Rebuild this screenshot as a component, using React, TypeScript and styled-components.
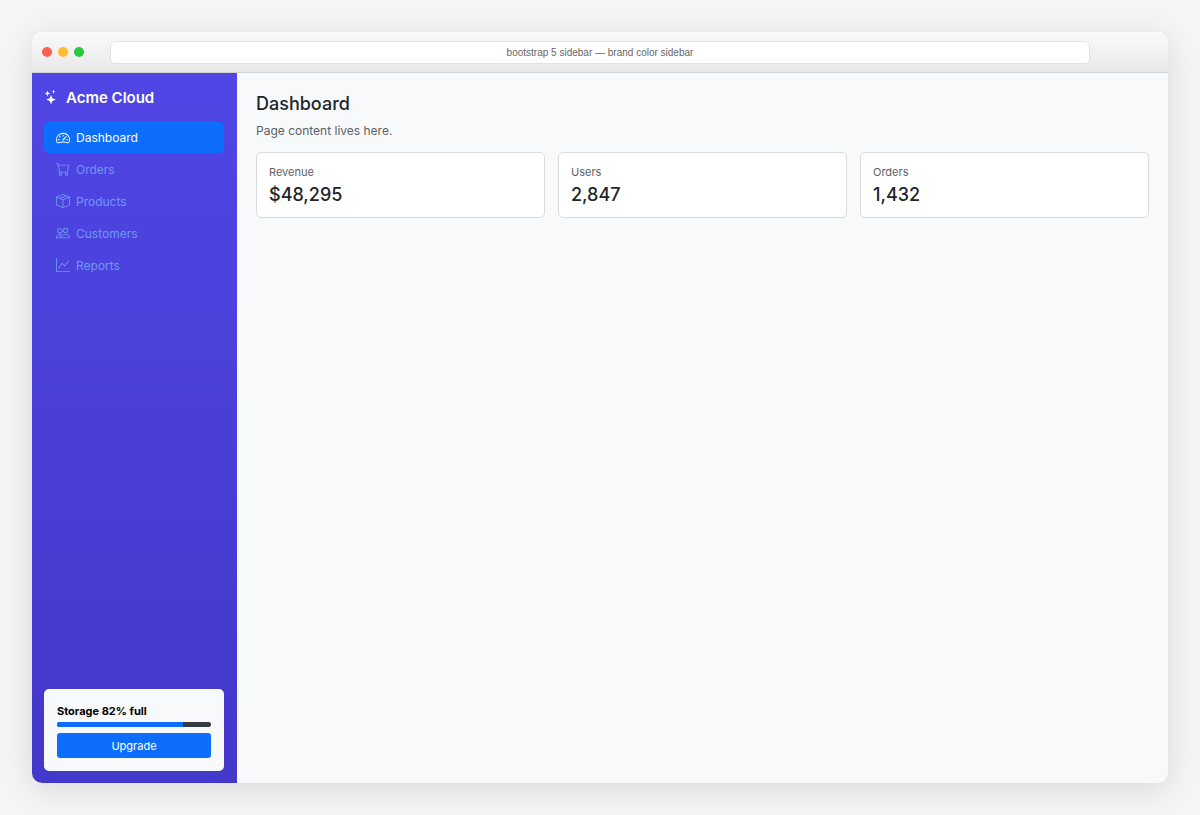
import React from 'react';
import styled, { createGlobalStyle } from 'styled-components';
import type { IconType } from 'react-icons';
import { BsBoxSeam, BsCart, BsGraphUp, BsPeople, BsSpeedometer2, BsStars } from 'react-icons/bs';

const GlobalStyle = createGlobalStyle`
  *, *::before, *::after { box-sizing: border-box; }
  body {
    margin: 0;
    background: #f5f5f7;
    color: #212529;
    font-family: Inter, "Liberation Sans", sans-serif;
    font-size: 12px;
  }
`;

const Page = styled.div`
  display: flex;
  min-height: 100vh;
  padding: 32px;
`;

const Window = styled.div`
  display: flex;
  flex: 1;
  flex-direction: column;
  min-width: 0;
  overflow: hidden;
  border-radius: 10px;
  background: #f8f9fb;
  box-shadow: 0 6px 32px rgba(0, 0, 0, 0.12);
`;

const TitleBar = styled.header`
  display: grid;
  grid-template-columns: 68px 1fr 68px;
  align-items: center;
  height: 41px;
  padding: 0 10px;
  border-bottom: 1px solid #d4d4d4;
  background: linear-gradient(#fafafa, #e8e8e8);
`;

const Lights = styled.div`
  display: flex;
  gap: 6px;
`;

const Light = styled.span<{ $color: string }>`
  width: 10px;
  height: 10px;
  border-radius: 50%;
  background: ${(p) => p.$color};
`;

const Address = styled.div`
  height: 23px;
  border: 1px solid #e2e2e2;
  border-radius: 5px;
  background: #fff;
  color: #666;
  font-family: "Liberation Sans", Arial, sans-serif;
  font-size: 10px;
  line-height: 21px;
  text-align: center;
`;

const Layout = styled.div`
  display: flex;
  flex: 1;
`;

const Sidebar = styled.aside`
  display: flex;
  flex-direction: column;
  flex: 0 0 205px;
  padding: 12px 13px 12px 12px;
  background: linear-gradient(#4f46e5, #4338ca);
`;

const Brand = styled.a`
  display: flex;
  align-items: center;
  gap: 8px;
  height: 24px;
  margin-bottom: 13px;
  color: #fff;
  font-size: 15px;
  font-weight: 600;
  text-decoration: none;
`;

const Nav = styled.nav`
  display: flex;
  flex-direction: column;
`;

const NavLink = styled.a<{ $active?: boolean }>`
  display: flex;
  align-items: center;
  gap: 6px;
  height: 31px;
  padding: 0 12px;
  border-radius: 5px;
  background: ${(p) => (p.$active ? '#0d6efd' : 'transparent')};
  color: ${(p) => (p.$active ? '#fff' : '#6f98f6')};
  font-size: 12px;
  text-decoration: none;

  & + & {
    height: 32px;
  }
`;

const StorageCard = styled.section`
  margin-top: auto;
  padding: 13px;
  border-radius: 5px;
  background: #f8f9fb;
`;

const StorageLabel = styled.label`
  display: block;
  margin-bottom: 2px;
  color: #000;
  font-size: 11px;
  font-weight: 700;
  line-height: 18px;
`;

const Meter = styled.progress`
  display: block;
  appearance: none;
  width: 100%;
  height: 5px;
  margin-bottom: 6px;
  overflow: hidden;
  border: 0;
  border-radius: 3px;
  &::-webkit-progress-bar { background: #343a40; }
  &::-webkit-progress-value { background: #0d6efd; }
  &::-moz-progress-bar { background: #0d6efd; }
`;

const UpgradeButton = styled.button`
  display: block;
  width: 100%;
  height: 25px;
  padding: 0;
  border: 0;
  border-radius: 3px;
  background: #0d6efd;
  color: #fff;
  font: inherit;
  font-size: 11px;
`;

const Content = styled.main`
  flex: 1;
  min-width: 0;
  padding: 19px;
`;

const Heading = styled.h1`
  margin: 0 0 6px;
  font-size: 18px;
  font-weight: 500;
  line-height: 23px;
`;

const Lead = styled.p`
  margin: 0 0 12px;
  color: #5c6166;
  font-size: 12px;
  line-height: 19px;
`;

const Cards = styled.div`
  display: grid;
  grid-template-columns: repeat(3, 1fr);
  gap: 13px;
`;

const Card = styled.section`
  padding: 11px 12px;
  border: 1px solid #d9dbde;
  border-radius: 5px;
  background: #fff;
`;

const CardLabel = styled.div`
  margin-bottom: 4px;
  color: #5c6166;
  font-size: 11px;
  line-height: 16px;
`;

const CardValue = styled.div`
  font-size: 18px;
  font-weight: 500;
  line-height: 22px;
`;

const links: { label: string; icon: IconType }[] = [
  { label: 'Dashboard', icon: BsSpeedometer2 },
  { label: 'Orders', icon: BsCart },
  { label: 'Products', icon: BsBoxSeam },
  { label: 'Customers', icon: BsPeople },
  { label: 'Reports', icon: BsGraphUp },
];

const stats = [
  { label: 'Revenue', value: '$48,295' },
  { label: 'Users', value: '2,847' },
  { label: 'Orders', value: '1,432' },
];

export default function App() {
  return (
    <>
      <GlobalStyle />
      <Page>
        <Window>
          <TitleBar>
            <Lights>
              <Light $color="#ff5f57" />
              <Light $color="#febc2e" />
              <Light $color="#28c840" />
            </Lights>
            <Address>bootstrap 5 sidebar — brand color sidebar</Address>
          </TitleBar>
          <Layout>
            <Sidebar>
              <Brand href="#">
                <BsStars size={14} />
                Acme Cloud
              </Brand>
              <Nav>
                {links.map(({ label, icon: Icon }, i) => (
                  <NavLink key={label} href="#" $active={i === 0}>
                    <Icon size={14} />
                    {label}
                  </NavLink>
                ))}
              </Nav>
              <StorageCard>
                <StorageLabel htmlFor="storage">Storage 82% full</StorageLabel>
                <Meter id="storage" value={82} max={100} />
                <UpgradeButton type="button">Upgrade</UpgradeButton>
              </StorageCard>
            </Sidebar>
            <Content>
              <Heading>Dashboard</Heading>
              <Lead>Page content lives here.</Lead>
              <Cards>
                {stats.map((s) => (
                  <Card key={s.label}>
                    <CardLabel>{s.label}</CardLabel>
                    <CardValue>{s.value}</CardValue>
                  </Card>
                ))}
              </Cards>
            </Content>
          </Layout>
        </Window>
      </Page>
    </>
  );
}
